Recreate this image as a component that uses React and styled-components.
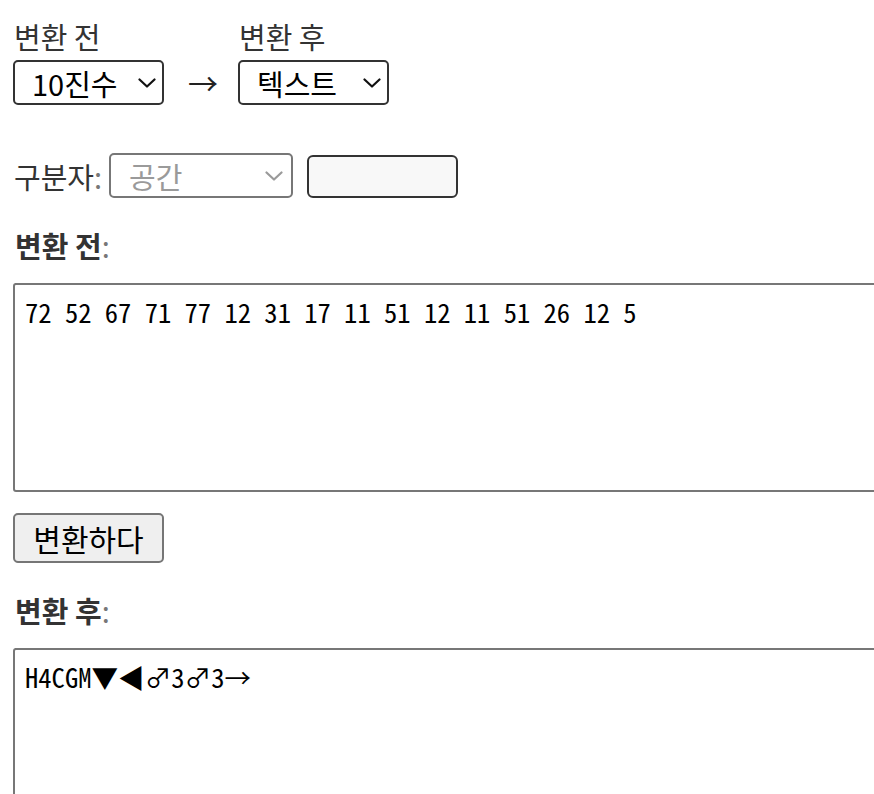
import React from "react";
import styled, { createGlobalStyle } from "styled-components";

const GlobalStyle = createGlobalStyle`
  * {
    box-sizing: border-box;
  }
  html, body {
    margin: 0;
    padding: 0;
    background: #fff;
    overflow: hidden;
  }
  body {
    font-family: "Noto Sans CJK KR", "Noto Sans", sans-serif;
    color: #333;
  }
`;

const Page = styled.div`
  padding: 18px 0 0 13px;
  width: 1100px;
`;

const TopRow = styled.div`
  display: flex;
  align-items: flex-end;
`;

const Field = styled.div`
  display: flex;
  flex-direction: column;
  align-items: flex-start;
`;

const Label = styled.label`
  font-size: 29px;
  line-height: 36px;
  color: #333;
  padding-left: 1px;
  margin-bottom: 6px;
`;

const Arrow = styled.span`
  display: inline-block;
  width: 74px;
  padding-left: 24px;
  font-family: "Noto Sans CJK KR", sans-serif;
  font-size: 30px;
  line-height: 45px;
  color: #222;
`;

const SelectWrap = styled.div`
  position: relative;
  width: ${({ w }) => w}px;
  height: ${({ h }) => h || 45}px;
`;

const Select = styled.select`
  appearance: none;
  width: 100%;
  height: 100%;
  margin: 0;
  padding: 0 0 0 ${({ pl }) => pl || 18}px;
  font-family: "Noto Sans CJK KR", "Noto Sans", sans-serif;
  font-size: 29px;
  color: ${({ disabled }) => (disabled ? "#9a9a9a" : "#000")};
  background: #fff;
  border: 2px solid ${({ disabled }) => (disabled ? "#777" : "#333")};
  border-radius: 5px;
  outline: none;
  &:disabled {
    opacity: 1;
  }
`;

const Chevron = styled.svg`
  position: absolute;
  right: ${({ r }) => r || 8}px;
  top: 50%;
  margin-top: -5px;
  pointer-events: none;
`;

const SepRow = styled.div`
  display: flex;
  align-items: center;
  margin-top: 48px;
  height: 45px;
`;

const SepLabel = styled.label`
  font-size: 29px;
  line-height: 36px;
  color: #333;
  padding-left: 1px;
  margin-right: 7px;
`;

const Colon = styled.span`
  font-weight: 400;
  color: #777;
`;

const TextInput = styled.input`
  width: 151px;
  height: 43px;
  margin-left: 14px;
  margin-top: 2px;
  background: #f8f8f8;
  border: 2px solid #333;
  border-radius: 6px;
  outline: none;
`;

const Heading = styled.h3`
  margin: 29px 0 20px 0;
  padding-left: 2px;
  font-size: 29px;
  line-height: 36px;
  font-weight: 700;
  color: #333;
`;

const TextArea = styled.textarea`
  display: block;
  width: 1000px;
  height: ${({ h }) => h}px;
  margin: 0;
  padding: 10px 10px;
  font-family: "Noto Sans Mono CJK KR", "Liberation Mono", monospace;
  font-size: 26.6px;
  line-height: 34px;
  color: #000;
  background: #fff;
  border: 2px solid #777;
  border-radius: 3px;
  resize: none;
  outline: none;
`;

const Button = styled.button`
  display: block;
  margin-top: 21px;
  width: 151px;
  height: 50px;
  padding: 0;
  font-family: "Noto Sans CJK KR", "Noto Sans", sans-serif;
  font-size: 30px;
  line-height: 46px;
  color: #000;
  background: #efefef;
  border: 2px solid #767676;
  border-radius: 5px;
`;

function Caret({ color = "#111", r }) {
  return (
    <Chevron r={r} width="18" height="10" viewBox="0 0 18 10">
      <polyline
        points="1.5,1.5 9,8.5 16.5,1.5"
        fill="none"
        stroke={color}
        strokeWidth="2.2"
        strokeLinecap="round"
        strokeLinejoin="round"
      />
    </Chevron>
  );
}

export default function App() {
  return (
    <Page>
      <GlobalStyle />
      <TopRow>
        <Field>
          <Label>변환 전</Label>
          <SelectWrap w={151}>
            <Select defaultValue="10" pl={17}>
              <option value="10">10진수</option>
              <option value="2">2진수</option>
              <option value="16">16진수</option>
              <option value="text">텍스트</option>
            </Select>
            <Caret />
          </SelectWrap>
        </Field>
        <Arrow>→</Arrow>
        <Field>
          <Label>변환 후</Label>
          <SelectWrap w={151}>
            <Select defaultValue="text" pl={17}>
              <option value="text">텍스트</option>
              <option value="10">10진수</option>
              <option value="2">2진수</option>
              <option value="16">16진수</option>
            </Select>
            <Caret />
          </SelectWrap>
        </Field>
      </TopRow>

      <SepRow>
        <SepLabel>
          구분자<Colon>:</Colon>
        </SepLabel>
        <SelectWrap w={184} h={45}>
          <Select disabled defaultValue="space">
            <option value="space">공간</option>
            <option value="comma">쉼표</option>
          </Select>
          <Caret color="#9a9a9a" r={10} />
        </SelectWrap>
        <TextInput type="text" />
      </SepRow>

      <Heading>
        변환 전<Colon>:</Colon>
      </Heading>
      <TextArea
        h={209}
        defaultValue="72 52 67 71 77 12 31 17 11 51 12 11 51 26 12 5"
      />
      <Button>변환하다</Button>

      <Heading>
        변환 후<Colon>:</Colon>
      </Heading>
      <TextArea h={209} defaultValue="H4CGM▼◀♂3♂3→" readOnly />
    </Page>
  );
}
